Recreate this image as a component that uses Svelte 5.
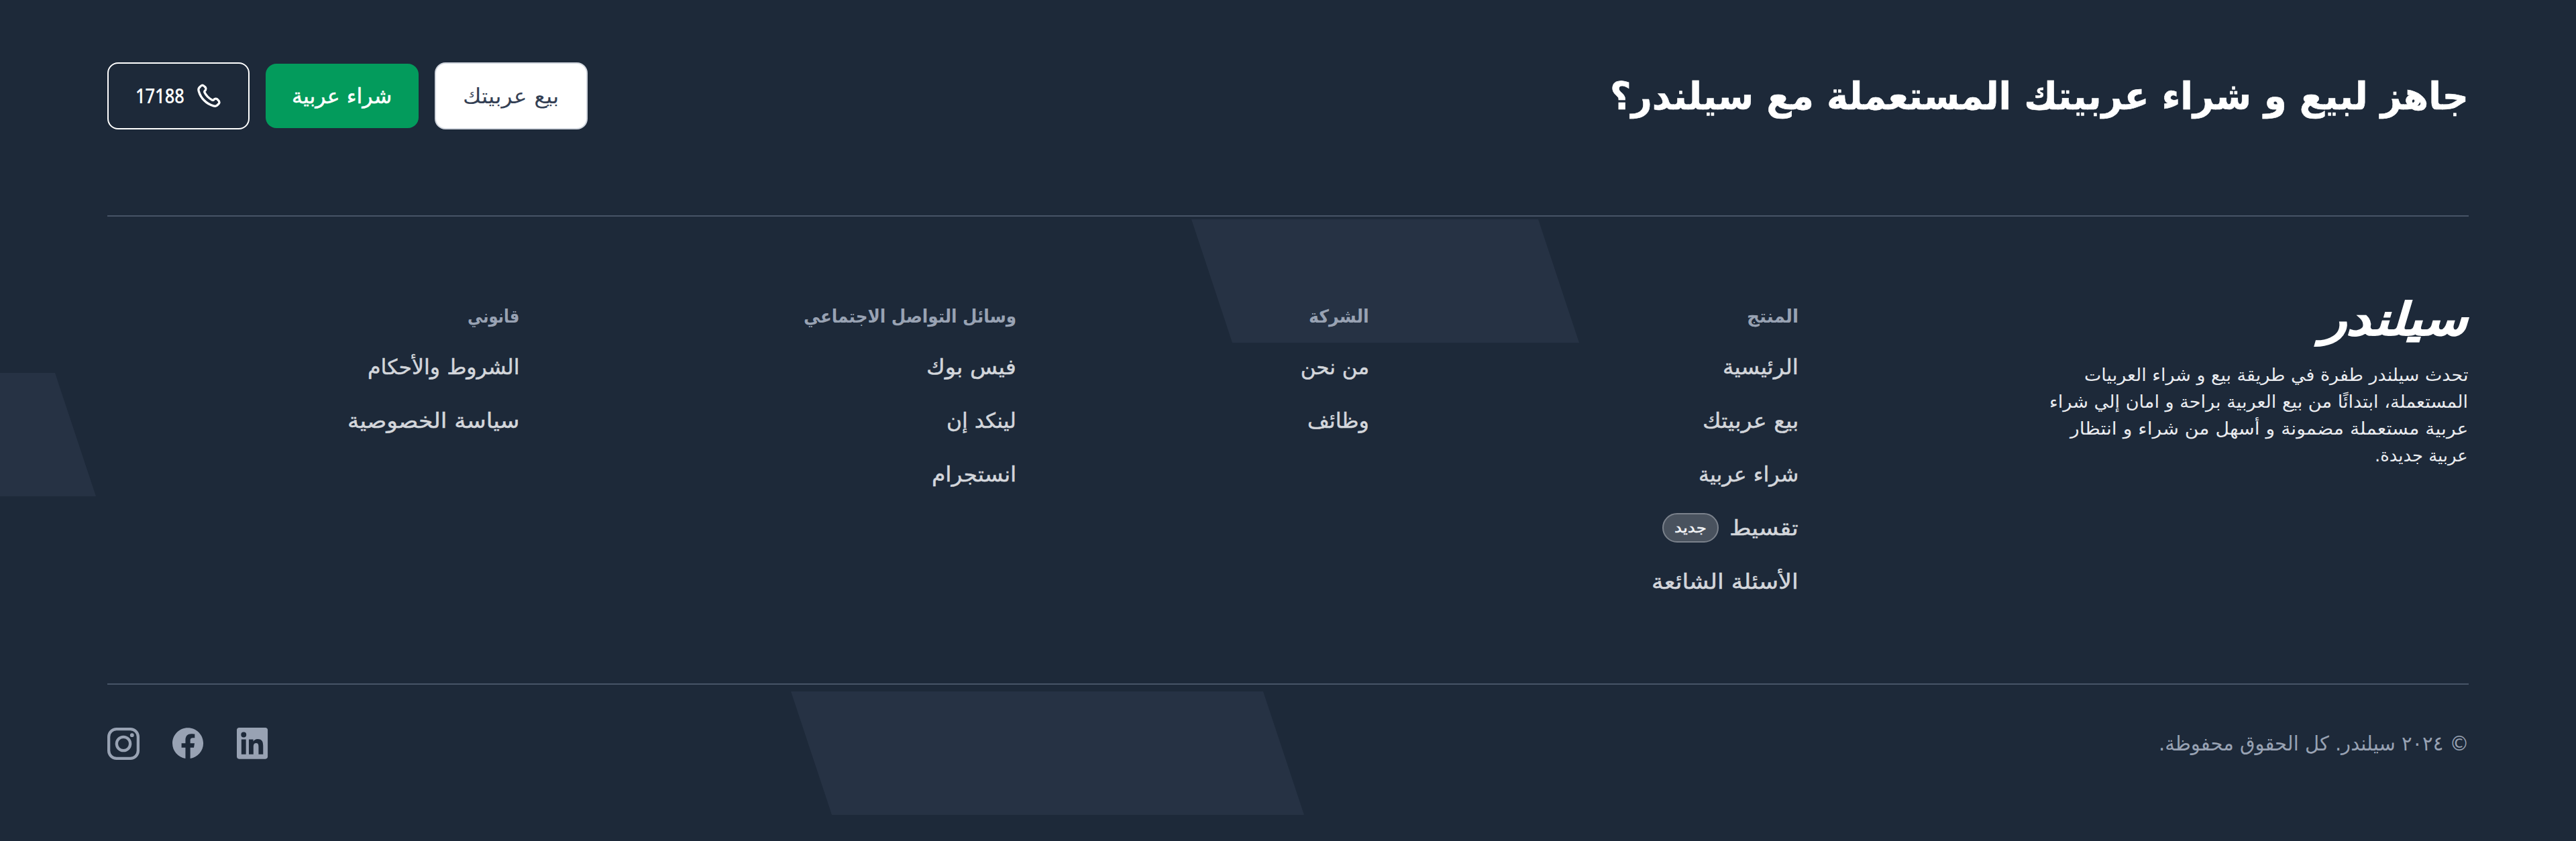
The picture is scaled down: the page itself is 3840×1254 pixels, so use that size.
<script>
  const columns = [
    {
      name: 'product',
      title: 'المنتج',
      width: 77,
      links: [
        { label: 'الرئيسية', width: 113 },
        { label: 'بيع عربيتك', width: 143 },
        { label: 'شراء عربية', width: 149 },
        { label: 'تقسيط', width: 103, badge: 'جديد' },
        { label: 'الأسئلة الشائعة', width: 219 },
      ],
    },
    {
      name: 'company',
      title: 'الشركة',
      width: 90,
      links: [
        { label: 'من نحن', width: 102 },
        { label: 'وظائف', width: 92 },
      ],
    },
    {
      name: 'social-links',
      title: 'وسائل التواصل الاجتماعي',
      width: 317,
      links: [
        { label: 'فيس بوك', width: 134 },
        { label: 'لينكد إن', width: 104 },
        { label: 'انستجرام', width: 126 },
      ],
    },
    {
      name: 'legal',
      title: 'قانوني',
      width: 77,
      links: [
        { label: 'الشروط والأحكام', width: 227 },
        { label: 'سياسة الخصوصية', width: 257 },
      ],
    },
  ];

  const about = [
    { text: 'تحدث سيلندر طفرة في طريقة بيع و شراء العربيات', width: 572 },
    { text: 'المستعملة، ابتدائًا من بيع العربية براحة و امان إلي شراء', width: 624 },
    { text: 'عربية مستعملة مضمونة و أسهل من شراء و انتظار', width: 593 },
    { text: 'عربية جديدة.', width: 139 },
  ];

  // Condenses a line of text horizontally so that it fills the given width.
  function fit(node, width) {
    const inner = node.firstElementChild;
    node.style.width = `${width}px`;
    inner.style.transform = `scaleX(${width / inner.offsetWidth})`;
  }
</script>

{#snippet line(text, width)}
  <span class="fit" use:fit={width}><span class="fit-inner">{text}</span></span>
{/snippet}

<footer class="footer" dir="rtl">
  <div class="shape shape-top"></div>
  <div class="shape shape-side"></div>
  <div class="shape shape-bottom"></div>

  <section class="cta">
    <h2>{@render line('جاهز لبيع و شراء عربيتك المستعملة مع سيلندر؟', 1280)}</h2>
    <div class="actions">
      <button class="btn sell">{@render line('بيع عربيتك', 143)}</button>
      <button class="btn buy">{@render line('شراء عربية', 149)}</button>
      <button class="btn phone">
        <svg viewBox="0 0 24 24" width="40" height="40" fill="none" stroke="currentColor" stroke-width="2" stroke-linecap="round" stroke-linejoin="round">
          <path d="M8.380 8.853a14.603 14.603 0 0 0 2.847 4.010 14.603 14.603 0 0 0 4.010 2.847c.124.060.187.090.265.112.280.082.625.023.862-.147.067-.048.124-.105.239-.219.350-.350.524-.524.700-.639a2 2 0 0 1 2.180 0c.176.115.350.290.700.639l.195.195c.532.531.797.797.942 1.082a2 2 0 0 1 0 1.806c-.145.285-.410.551-.942 1.082l-.157.158c-.530.530-.795.795-1.155.997-.400.224-1.020.386-1.479.384-.413-.001-.695-.081-1.260-.241a19.038 19.038 0 0 1-8.283-4.874A19.039 19.039 0 0 1 3.170 7.761c-.160-.564-.240-.846-.241-1.260a3.377 3.377 0 0 1 .384-1.478c.202-.360.467-.625.997-1.155l.157-.158c.532-.531.798-.797 1.083-.941a2 2 0 0 1 1.805 0c.286.144.551.410 1.083.941l.195.195c.350.350.524.525.638.700a2 2 0 0 1 0 2.180c-.114.176-.289.350-.638.700-.115.114-.172.172-.220.238-.170.238-.228.582-.147.862.023.080.053.142.113.266z" />
        </svg>
        {@render line('17188', 73)}
      </button>
    </div>
  </section>

  <nav class="main">
    <div class="brand">
      <div class="logo">{@render line('سيلندر', 218)}</div>
      <div class="about">
        {#each about as row}
          <div>{@render line(row.text, row.width)}</div>
        {/each}
      </div>
    </div>
    {#each columns as column}
      <div class="column {column.name}">
        <h3>{@render line(column.title, column.width)}</h3>
        <ul>
          {#each column.links as link}
            <li>
              {@render line(link.label, link.width)}
              {#if link.badge}<span class="badge">{@render line(link.badge, 48)}</span>{/if}
            </li>
          {/each}
        </ul>
      </div>
    {/each}
  </nav>

  <div class="bottom">
    <p>{@render line('© ٢٠٢٤ سيلندر. كل الحقوق محفوظة.', 463)}</p>
    <div class="social">
      <svg viewBox="0 0 24 24" width="48" height="48" fill="currentColor">
        <path d="M22.223 0H1.772C.792 0 0 .773 0 1.730v20.536C0 23.222.792 24 1.772 24h20.451c.98 0 1.777-.778 1.777-1.730V1.730C24 .773 23.203 0 22.223 0zM7.120 20.452H3.558V8.995H7.120v11.457zM5.339 7.434a2.064 2.064 0 1 1 0-4.130 2.064 2.064 0 0 1 0 4.130zM20.452 20.452h-3.558v-5.569c0-1.327-.024-3.037-1.852-3.037-1.851 0-2.133 1.449-2.133 2.944v5.662H9.356V8.995h3.413v1.566h.047c.473-.9 1.636-1.852 3.365-1.852 3.605 0 4.271 2.372 4.271 5.457v6.286z" transform="translate(.5 0) scale(.96 .973)" />
      </svg>
      <svg viewBox="0 0 24 24" width="48" height="48" fill="currentColor">
        <path d="M24 12.073c0-6.627-5.373-12-12-12s-12 5.373-12 12c0 5.990 4.388 10.954 10.125 11.854v-8.385H7.078v-3.470h3.047V9.430c0-3.007 1.792-4.669 4.533-4.669 1.312 0 2.686.235 2.686.235v2.953H15.830c-1.491 0-1.956.925-1.956 1.874v2.250h3.328l-.532 3.470h-2.796v8.385C19.612 23.027 24 18.062 24 12.073z" transform="translate(.5 0) scale(.96)" />
      </svg>
      <svg viewBox="0 0 48 48" width="48" height="48" fill="none" stroke="currentColor">
        <rect x="2.150" y="2.150" width="43.700" height="43.700" rx="11.500" stroke-width="4.300" />
        <circle cx="24" cy="24" r="10.150" stroke-width="4.300" />
        <circle cx="36.800" cy="11.200" r="2.900" fill="currentColor" stroke="none" />
      </svg>
    </div>
  </div>
</footer>

<style>
  :global(body) {
    background: #1d2939;
  }
  .footer {
    position: relative;
    box-sizing: border-box;
    height: 1254px;
    padding: 0 160px;
    overflow: hidden;
    background: #1d2939;
    color: #fff;
    font-family: 'DejaVu Sans', sans-serif;
  }
  h2, h3, ul, p {
    margin: 0;
    padding: 0;
  }
  .fit {
    display: inline-block;
    flex: none;
    text-align: start;
    white-space: nowrap;
  }
  .fit-inner {
    display: inline-block;
    transform-origin: right center;
  }
  .shape {
    position: absolute;
    height: 184px;
    background: #263244;
  }
  .shape-top {
    left: 1776px;
    top: 327px;
    width: 578px;
    clip-path: polygon(0 0, 517px 0, 100% 100%, 61px 100%);
  }
  .shape-side {
    left: 0;
    top: 556px;
    width: 143px;
    clip-path: polygon(0 0, 82px 0, 100% 100%, 0 100%);
  }
  .shape-bottom {
    left: 1179px;
    top: 1031px;
    width: 765px;
    clip-path: polygon(0 0, 704px 0, 100% 100%, 61px 100%);
  }
  .cta {
    position: relative;
    box-sizing: border-box;
    height: 323px;
    padding-top: 93px;
    display: flex;
    justify-content: space-between;
    align-items: flex-start;
    border-bottom: 2px solid #475467;
  }
  h2 {
    font-size: 57px;
    line-height: 100px;
    font-weight: 700;
    -webkit-text-stroke: 0.6px currentColor;
  }
  .actions {
    display: flex;
    align-items: center;
    gap: 24px;
  }
  .btn {
    box-sizing: border-box;
    display: flex;
    align-items: center;
    justify-content: center;
    height: 100px;
    width: 228px;
    padding: 0;
    border: 2px solid #d0d5dd;
    border-radius: 16px;
    background: #fff;
    color: #344054;
    font-family: inherit;
    font-size: 31px;
    line-height: 60px;
  }
  .buy {
    height: 96px;
    border: 0;
    background: #039b5c;
    color: #fff;
    -webkit-text-stroke: 0.5px currentColor;
  }
  .phone {
    width: 212px;
    gap: 16px;
    border-color: #fff;
    background: none;
    color: #fff;
    font-family: 'Open Sans', sans-serif;
    font-size: 30px;
    font-weight: 600;
  }
  .main {
    position: relative;
    display: grid;
    grid-template-columns: 999px 640px 526px 741px 1fr;
    height: 698px;
    box-sizing: border-box;
    padding-top: 124px;
    border-bottom: 2px solid #475467;
  }
  .brand {
    padding-right: 1px;
  }
  .logo {
    height: 88px;
    padding-right: 2px;
    box-sizing: border-box;
    font-size: 66px;
    line-height: 60px;
    font-weight: 700;
    font-style: italic;
    -webkit-text-stroke: 1.6px currentColor;
  }
  .about {
    color: #eaecf0;
    font-size: 26px;
    line-height: 40px;
    padding-top: 4px;
  }
  h3 {
    height: 60px;
    color: #98a2b3;
    font-size: 27px;
    line-height: 49px;
    font-weight: 700;
  }
  ul {
    list-style: none;
  }
  li {
    display: flex;
    align-items: center;
    gap: 16px;
    height: 80px;
    color: #d3d6db;
    font-size: 31px;
    line-height: 60px;
    -webkit-text-stroke: 0.5px currentColor;
  }
  .badge {
    box-sizing: border-box;
    display: flex;
    align-items: center;
    justify-content: center;
    width: 84px;
    height: 44px;
    border: 2px solid #7b828c;
    border-radius: 22px;
    background: #49525e;
    color: #f2f4f7;
    font-size: 21px;
    line-height: 36px;
  }
  .bottom {
    position: relative;
    display: flex;
    justify-content: space-between;
    align-items: flex-start;
    padding-top: 64px;
    color: #98a2b3;
  }
  .bottom p {
    font-size: 30px;
    line-height: 48px;
  }
  .social {
    display: flex;
    gap: 48px;
  }
  .social svg {
    display: block;
  }
</style>
